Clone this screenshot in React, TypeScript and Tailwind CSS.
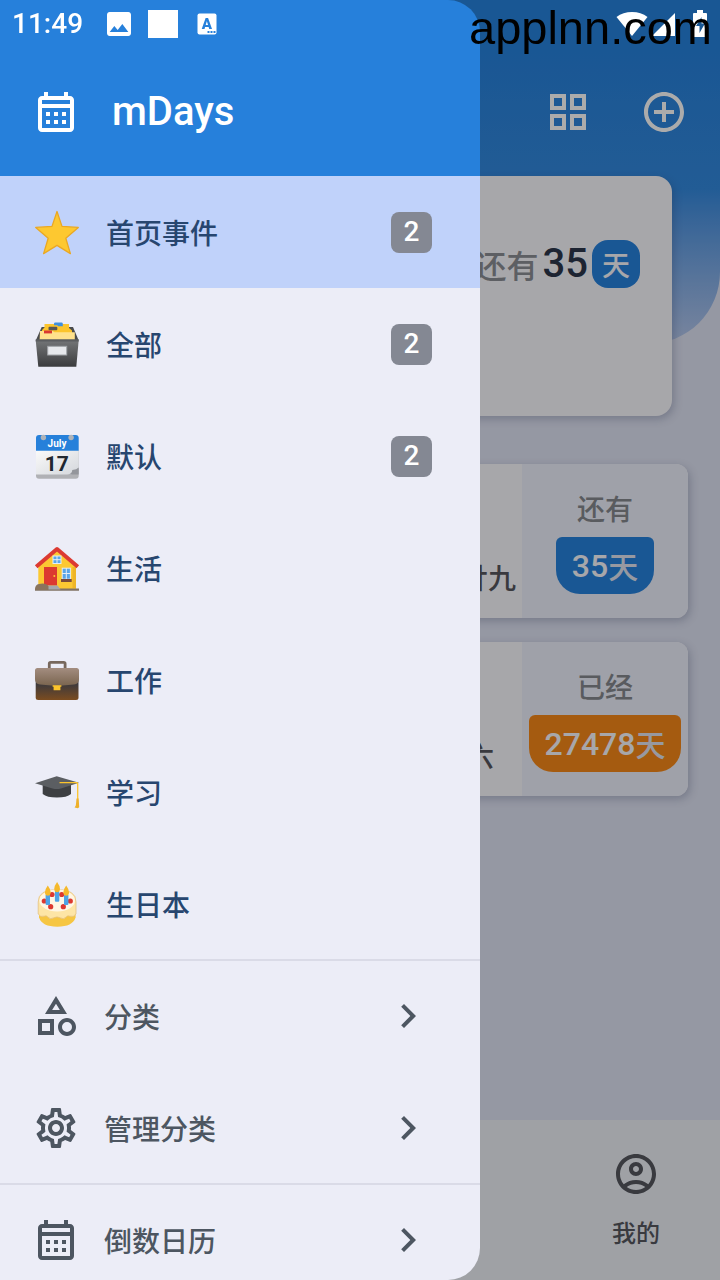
import { useState } from 'react';
import type { ReactNode } from 'react';
import {
  MdAddCircleOutline,
  MdChevronRight,
  MdGridView,
  MdImage,
  MdOutlineAccountCircle,
  MdOutlineCategory,
  MdOutlineSettings,
} from 'react-icons/md';

type Category = {
  name: string;
  icon: ReactNode;
  count?: number;
};

function CalendarIcon() {
  return (
    <svg viewBox="0 -1 24 24" className="size-12 shrink-0" fill="currentColor">
      <path d="M7 11H9V13H7V11M21 5V19C21 20.11 20.11 21 19 21H5C3.89 21 3 20.1 3 19V5C3 3.9 3.9 3 5 3H6V1H8V3H16V1H18V3H19C20.11 3 21 3.9 21 5M5 5V7H19V5H5M19 19V9H5V19H19M15 13V11H17V13H15M11 13V11H13V13H11M7 15H9V17H7V15M11 15V17H13V15H11M15 15V17H17V15H15Z" />
    </svg>
  );
}

function Emoji({ children }: { children: ReactNode }) {
  return (
    <svg viewBox="0 0 50 50" className="size-[50px] shrink-0" aria-hidden="true">
      {children}
    </svg>
  );
}

function Star() {
  return (
    <Emoji>
      <path
        d="M25 4.5 30 19.4 46.3 20.4 33.8 31.2 38.4 46.6 25 38.4 11.6 46.6 16.2 31.2 3.7 20.4 20 19.4Z"
        fill="#fdc830"
        stroke="#eaa824"
        strokeWidth="1.3"
        strokeLinejoin="round"
      />
    </Emoji>
  );
}

function FileBox() {
  return (
    <Emoji>
      <defs>
        <linearGradient id="boxFront" x1="0" y1="0" x2="0" y2="1">
          <stop offset="0" stopColor="#747678" />
          <stop offset="1" stopColor="#3b3c3e" />
        </linearGradient>
      </defs>
      <path d="M9.7 8 4 21h42.5L41 8Z" fill="#4a4b4d" />
      <path d="M12.5 6.5V5h24.5v4l3 2.5V20H10v-9l2.5-2.5Z" fill="#fcc42c" />
      <path d="M22 4.7q0-1.3 1.3-1.3h6.2q1.3 0 1.3 1.3v2.6h-4.6l-1-1.1H22Z" fill="#3f8fdd" />
      <rect x="16.5" y="7.7" width="8.8" height="3.6" rx="1" fill="#595653" />
      <path d="M8 12h12.5l2 1.3h20.3V21H7.6Z" fill="#ffe18c" />
      <rect x="12" y="11.5" width="8" height="2.9" fill="#d93830" />
      <path d="M3.7 21h43l-2.4 26.7H6.3Z" fill="url(#boxFront)" />
      <path d="M3.7 20.2h43v2.3h-43Z" fill="#5b5d60" />
      <rect x="15.7" y="27.3" width="19" height="8.7" fill="#e6e8ec" stroke="#a1a4a8" strokeWidth="1" />
    </Emoji>
  );
}

function JulyCalendar() {
  return (
    <Emoji>
      <defs>
        <linearGradient id="page" x1="0" y1="0" x2="1" y2="1">
          <stop offset="0" stopColor="#fafafa" />
          <stop offset="1" stopColor="#d4d7dc" />
        </linearGradient>
      </defs>
      <path d="M4 19h42.7v25.7q0 3-3 3H7q-3 0-3-3Z" fill="#b0b1b5" />
      <path d="M4 19h42.7v18.5l-7.5 6H4Z" fill="url(#page)" />
      <path d="M7 4h36.7q3 0 3 3v12.7H4V7q0-3 3-3Z" fill="#2680da" />
      <path d="M35 43.5q5-.2 5.3-4.5 4.5-.2 6.4-2.6v7.1Z" fill="#94969c" />
      <circle cx="11.4" cy="6.5" r="2.7" fill="#aeb3b9" />
      <circle cx="39.1" cy="6.5" r="2.7" fill="#aeb3b9" />
      <text x="25" y="15.7" textAnchor="middle" fontFamily="Roboto, sans-serif" fontWeight="700" fontSize="10" fill="#fff">
        July
      </text>
      <text x="24.7" y="39.7" textAnchor="middle" fontFamily="Roboto, sans-serif" fontWeight="700" fontSize="21" fill="#20272f">
        17
      </text>
    </Emoji>
  );
}

function House() {
  return (
    <Emoji>
      <path d="M25 6 44 22v24H6.3V22Z" fill="#fcc832" />
      <path d="M40.5 24H44v21h-3.5Z" fill="#eeb528" />
      <path d="M4.2 23.8 25 6l20.8 17.8" fill="none" stroke="#dc3a32" strokeWidth="4" strokeLinejoin="round" />
      <rect x="12" y="24" width="13" height="18.5" fill="#dc3a30" />
      <circle cx="22.3" cy="33" r="1" fill="#fcc832" />
      <rect x="21" y="13" width="8" height="7.5" fill="#5aa5e8" stroke="#e4eef6" strokeWidth="1" />
      <path d="M25 13v7.5M21 16.7h8" stroke="#e4eef6" strokeWidth="1" />
      <rect x="30.2" y="25.2" width="8.2" height="11" fill="#5aa5e8" stroke="#e4eef6" strokeWidth="1" />
      <path d="M34.3 25v11M30 30.5h8.4" stroke="#e4eef6" strokeWidth="1" />
      <rect x="29" y="36" width="10.7" height="3" fill="#7a4a3a" />
      <path d="M3 45.5h44v2.2H3Z" fill="#817263" />
      <path d="M16 42.5h9.5l3 4H15Z" fill="#a6a8ac" />
      <path d="M3 46.5q0-5 4-5.5 7-1.5 9.5 2.3v3.7H3Z" fill="#8a745e" />
    </Emoji>
  );
}

function Briefcase() {
  return (
    <Emoji>
      <defs>
        <linearGradient id="caseFlap" x1="0" y1="0" x2="0" y2="1">
          <stop offset="0" stopColor="#a38d80" />
          <stop offset="1" stopColor="#79644e" />
        </linearGradient>
        <linearGradient id="caseBody" x1="0" y1="0" x2="0" y2="1">
          <stop offset="0.5" stopColor="#3f3a3b" />
          <stop offset="1" stopColor="#7b4c20" />
        </linearGradient>
      </defs>
      <path d="M17.3 14V8.8q0-1.4 1.4-1.4h13q1.4 0 1.4 1.4V14" fill="none" stroke="#77685d" strokeWidth="2.8" />
      <rect x="3.7" y="14" width="42.8" height="31" rx="2.5" fill="url(#caseBody)" />
      <path d="M5.5 13h39q2.5 0 2.5 2.5V24q0 5-5 5.4L25 31 8 29.4Q3 29 3 24v-8.5q0-2.5 2.5-2.5Z" fill="url(#caseFlap)" />
      <path d="M20.6 30.2h8.8v1.5h-1v3.5h-6.8v-3.5h-1Z" fill="#fcc42c" />
    </Emoji>
  );
}

function GraduationCap() {
  return (
    <Emoji>
      <path d="M10.7 18h28.3v9q-4 3.5-14.1 3.5T10.7 27Z" fill="#3d3f42" />
      <path d="M3 16.2 24.7 9.3 47 15.8l-18 5.7q-4.3 1.2-8.5 0Z" fill="#5b5e62" />
      <path d="M27.5 15.7h17.3l.9.9V32" fill="none" stroke="#fcc42c" strokeWidth="1.3" />
      <path d="M44.5 31.5h2.2l.5 8.8-1.4 1-3.2-.9q1.5-1.5 1.4-3.4Z" fill="#eeb02a" />
    </Emoji>
  );
}

function Cake() {
  return (
    <Emoji>
      <path d="M7 30h36.6v8.5q-3 9.2-18.3 9.2T7 38.5Z" fill="#f6c643" />
      <path
        d="M6.2 23q0-12.5 19-12.5T44 23v12q-2.5 3.5-6 2.2-2.5-1-4 1-2.5 2.6-5.5.7-3.5-2-7 0-3 1.9-5.5-.7-1.5-2-4-1-3.5 1.3-5.8-2.2Z"
        fill="#fde5a6"
        stroke="#e5c283"
        strokeWidth=".8"
      />
      <ellipse cx="25.2" cy="21.5" rx="17.8" ry="11" fill="#fff6e4" />
      <g fill="#dc3830">
        <circle cx="12.3" cy="22" r="2.6" />
        <circle cx="18.7" cy="27.7" r="2.6" />
        <circle cx="31.3" cy="27.7" r="2.6" />
        <circle cx="38.3" cy="22" r="2.6" />
        <circle cx="20" cy="15.5" r="2.6" />
        <circle cx="29.7" cy="15.5" r="2.6" />
      </g>
      <g fill="#4da3e6">
        <rect x="13.6" y="15.5" width="4.4" height="10.5" rx="1" />
        <rect x="22.9" y="12" width="4.4" height="10.7" rx="1" />
        <rect x="32" y="15.5" width="4.4" height="10.5" rx="1" />
      </g>
      <g fill="#f5b92c">
        <path d="M15.8 6.5q3 4 2.9 7-.4 3.2-2.9 3.2t-2.9-3.2q-.1-3 2.9-7Z" />
        <path d="M25.1 3q3 4 2.9 7-.4 3.2-2.9 3.2T22.2 10q-.1-3 2.9-7Z" />
        <path d="M34.2 6.5q3 4 2.9 7-.4 3.2-2.9 3.2t-2.9-3.2q-.1-3 2.9-7Z" />
      </g>
    </Emoji>
  );
}

const categories: Category[] = [
  { name: '首页事件', icon: <Star />, count: 2 },
  { name: '全部', icon: <FileBox />, count: 2 },
  { name: '默认', icon: <JulyCalendar />, count: 2 },
  { name: '生活', icon: <House /> },
  { name: '工作', icon: <Briefcase /> },
  { name: '学习', icon: <GraduationCap /> },
  { name: '生日本', icon: <Cake /> },
];

const events = [
  { date: '廿九', datePadding: 'pr-1.5', label: '还有', days: 35, color: 'bg-[#2680db]' },
  { date: '六', datePadding: 'pr-7', label: '已经', days: 27478, color: 'bg-[#f48718]' },
];

function StatusBar() {
  return (
    <div className="pointer-events-none absolute inset-x-0 top-0 z-20 flex h-12 items-center justify-between px-3 text-white">
      <div className="flex items-center">
        <span className="text-[28px] font-medium leading-12">11:49</span>
        <MdImage className="ml-5 size-8" />
        <span className="ml-[13px] h-7 w-[30px] bg-white" />
        <svg viewBox="0 0 20 22" className="ml-[19px] h-[22px] w-5">
          <rect x=".5" y=".5" width="19" height="21" rx="2" fill="#fff" />
          <text x="9.8" y="15.5" textAnchor="middle" fontFamily="Roboto, sans-serif" fontWeight="900" fontSize="15" fill="#2680db">
            A
          </text>
          <path d="M10.5 18h2v2h-2zM13.5 18h2v2h-2zM16.5 18h2v2h-2z" fill="#2680db" />
        </svg>
      </div>
      <div className="flex items-center">
        <svg viewBox="0 0 32 24" className="h-6 w-8" fill="currentColor">
          <path d="M16 24 .5 5Q7 0 16 0t15.5 5Z" />
        </svg>
        <svg viewBox="0 0 24 24" className="ml-1 size-6" fill="currentColor">
          <path d="M23 1v23H0Z" />
        </svg>
        <svg viewBox="0 0 16 28" className="ml-4 h-7 w-4" fill="currentColor">
          <path fillRule="evenodd" d="M5 0h6v3h3q1 0 1 1v22q0 1-1 1H2q-1 0-1-1V4q0-1 1-1h3ZM9.5 7 4 16h3.5v7L13 13.5H9.5Z" />
        </svg>
      </div>
    </div>
  );
}

function Drawer({ active, onSelect }: { active: string; onSelect: (name: string) => void }) {
  return (
    <aside className="absolute inset-y-0 left-0 z-10 w-2/3 overflow-y-auto rounded-r-[32px] bg-[#ecedf7] [scrollbar-width:none]">
      <div className="flex h-44 items-center gap-8 bg-[#2680db] pl-8 pt-12 text-white">
        <CalendarIcon />
        <h1 className="text-[40px] font-medium leading-12">mDays</h1>
      </div>

      <nav className="font-['Noto_Sans_CJK_SC',sans-serif] text-[28px] font-medium text-[#4d5661]">
        <ul>
          {categories.map((item) => (
            <li key={item.name}>
              <button
                type="button"
                onClick={() => onSelect(item.name)}
                className={`flex h-28 w-full items-center pl-8 pr-12 text-[#27466f] ${
                  item.name === active ? 'bg-[#c0d2fa]' : ''
                }`}
              >
                {item.icon}
                <span className="ml-6">{item.name}</span>
                {item.count && (
                  <span className="ml-auto flex size-[41px] items-center justify-center rounded-lg bg-[#848893] font-[Roboto,sans-serif] text-white">
                    {item.count}
                  </span>
                )}
              </button>
            </li>
          ))}
        </ul>

        <hr className="-my-px border-t-2 border-[#dadbe7]" />
        <ul>
          <li>
            <a href="#category" className="flex h-28 items-center gap-6 pl-8 pr-12">
              <MdOutlineCategory className="size-12" />
              <span>分类</span>
              <MdChevronRight className="ml-auto size-12" />
            </a>
          </li>
          <li>
            <a href="#manage" className="flex h-28 items-center gap-6 pl-8 pr-12">
              <MdOutlineSettings className="size-12" />
              <span>管理分类</span>
              <MdChevronRight className="ml-auto size-12" />
            </a>
          </li>
        </ul>

        <hr className="-my-px border-t-2 border-[#dadbe7]" />
        <ul>
          <li>
            <a href="#calendar" className="flex h-28 items-center gap-6 pl-8 pr-12">
              <CalendarIcon />
              <span>倒数日历</span>
              <MdChevronRight className="ml-auto size-12" />
            </a>
          </li>
        </ul>
      </nav>
    </aside>
  );
}

export default function App() {
  const [active, setActive] = useState('首页事件');

  return (
    <div className="relative flex h-screen flex-col overflow-hidden bg-[#dce0f0] font-[Roboto,'Noto_Sans_CJK_SC',sans-serif]">
      {/* Header */}
      <header className="rounded-br-[72px] bg-linear-to-b from-[#2680db] from-15% via-[#3388dc] via-55% to-[#b4c5e8] pb-42 pt-12">
        <div className="flex h-32 items-center justify-end gap-12 pr-8 text-[#fdfdfd]">
          <button type="button" aria-label="视图">
            <MdGridView className="size-12" />
          </button>
          <button type="button" aria-label="添加">
            <MdAddCircleOutline className="size-12" />
          </button>
        </div>
      </header>

      <main className="-mt-42 flex-1 font-['Noto_Sans_CJK_SC',sans-serif] font-medium">
        {/* Pinned event */}
        <section className="mx-12 flex h-60 items-start justify-end gap-1 rounded-2xl bg-[#f7f6fb] px-8 pt-16 shadow-[2px_3px_8px] shadow-[#28325a]/25">
          <span className="text-[32px] leading-12 text-[#898c92]">还有</span>
          <span className="font-[Roboto,sans-serif] text-[40px] leading-12 text-[#2c364b]">35</span>
          <span className="flex size-12 items-center justify-center rounded-2xl bg-[#2680db] text-[28px] text-[#f7f6fb]">
            天
          </span>
        </section>

        {/* Event list */}
        <ul className="mx-8 mt-12 flex flex-col gap-6">
          {events.map((event) => (
            <li
              key={event.label}
              className="flex h-[154px] overflow-hidden rounded-xl bg-[#f7f6fb] shadow-[2px_3px_8px] shadow-[#28325a]/25"
            >
              <div className={`flex flex-1 items-end justify-end pb-5 text-[28px] text-[#54555c] ${event.datePadding}`}>
                {event.date}
              </div>
              <div className="flex w-[166px] flex-col items-center bg-[#ebeef9] pt-6">
                <span className="text-[28px] leading-10 text-[#84878d]">{event.label}</span>
                <span
                  className={`mt-[9px] flex h-[57px] items-center rounded-b-3xl rounded-t-md px-4 font-[Roboto,sans-serif] text-[32px] text-[#f7f6fb] ${event.color}`}
                >
                  {event.days}
                  <span className="font-['Noto_Sans_CJK_SC',sans-serif] text-[30px] text-[#dfe2ee]">天</span>
                </span>
              </div>
            </li>
          ))}
        </ul>
      </main>

      <footer className="flex h-40 justify-end bg-[#eaedf3] text-[#54565e]">
        <a href="#mine" className="flex w-42 flex-col items-center pt-[30px]">
          <MdOutlineAccountCircle className="size-12" />
          <span className="mt-4 font-['Noto_Sans_CJK_SC',sans-serif] text-2xl font-medium leading-9">我的</span>
        </a>
      </footer>

      <div className="absolute inset-0 bg-black/32" />
      <Drawer active={active} onSelect={setActive} />
      <StatusBar />
      <span className="pointer-events-none absolute right-2 top-1 z-30 font-['Liberation_Sans',sans-serif] text-[47px] leading-12 text-black">
        applnn.com
      </span>
    </div>
  );
}
